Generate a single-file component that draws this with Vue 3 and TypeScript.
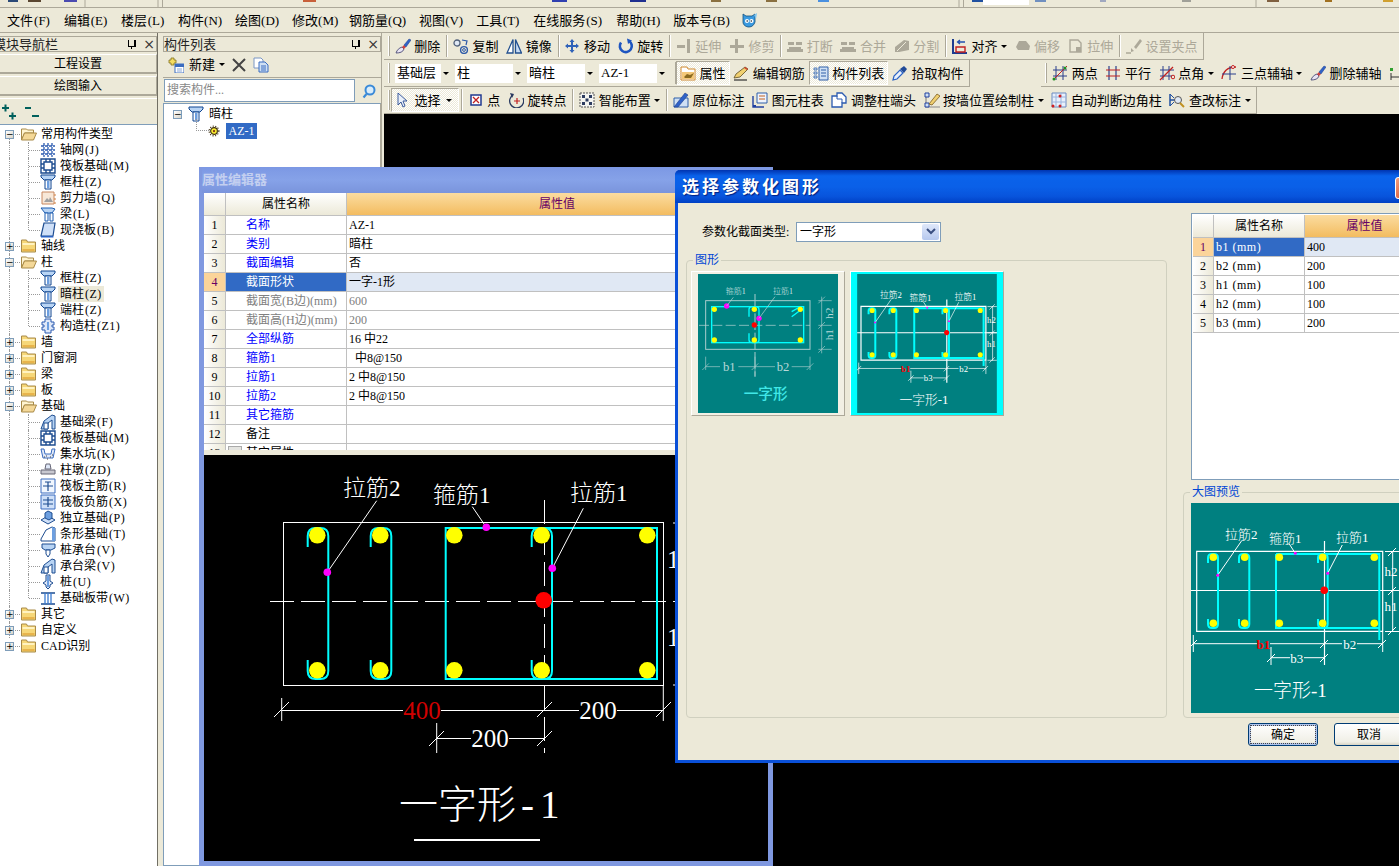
<script setup lang="ts">
type Tool = { kind?: "sep" | "grip" | "combo"; icon?: string; text?: string; off?: boolean; on?: boolean; caret?: boolean; w?: number };
type TreeRow = { level: number; open?: boolean; icon: string; name: string; key?: string; last?: boolean; hot?: boolean };
type PropRow = { no: number; name: string; value?: string; tone?: "link" | "off" | "plain"; sel?: boolean };

const sep: Tool = { kind: "sep" };
const grip: Tool = { kind: "grip" };

const menus = [
  ["文件", "(F)"], ["编辑", "(E)"], ["楼层", "(L)"], ["构件", "(N)"], ["绘图", "(D)"], ["修改", "(M)"],
  ["钢筋量", "(Q)"], ["视图", "(V)"], ["工具", "(T)"], ["在线服务", "(S)"], ["帮助", "(H)"], ["版本号", "(B)"],
];

const shards: [number, number, string][] = [
  [8, 10, "#2b4a78"], [28, 13, "#5a4630"], [64, 13, "#4a4ab0"], [303, 13, "#c8603a"], [552, 15, "#3040b0"],
  [630, 16, "#203090"], [711, 10, "#8a7040"], [766, 11, "#8a7040"], [818, 11, "#4a90e0"], [972, 11, "#2050a0"],
  [1035, 11, "#7090c0"], [1100, 6, "#a0a8c0"], [1182, 9, "#a0a098"], [1267, 12, "#806040"], [1325, 7, "#a07020"], [1383, 10, "#d0a030"],
];

const row1: Tool[] = [
  grip, { icon: "brush", text: "删除" }, sep, { icon: "copy", text: "复制" }, { icon: "mirror", text: "镜像" }, sep,
  { icon: "move", text: "移动" }, { icon: "rotate", text: "旋转" }, sep,
  { icon: "extend", text: "延伸", off: true }, { icon: "trim", text: "修剪", off: true }, sep,
  { icon: "breakb", text: "打断", off: true }, { icon: "breakb", text: "合并", off: true }, { icon: "split", text: "分割", off: true }, sep,
  { icon: "align", text: "对齐", caret: true }, { icon: "blob", text: "偏移", off: true }, { icon: "stretch", text: "拉伸", off: true }, sep,
  { icon: "grips", text: "设置夹点", off: true },
];
const row2a: Tool[] = [
  grip,
  { kind: "combo", text: "基础层", w: 56 }, { kind: "combo", text: "柱", w: 68 },
  { kind: "combo", text: "暗柱", w: 68 }, { kind: "combo", text: "AZ-1", w: 68 }, sep,
  { icon: "attr", text: "属性", on: true }, { icon: "pencil", text: "编辑钢筋" },
  { icon: "list", text: "构件列表", on: true }, { icon: "dropper", text: "拾取构件" },
];
const row2b: Tool[] = [
  grip, { icon: "twopt", text: "两点" }, { icon: "para", text: "平行" }, { icon: "angle", text: "点角", caret: true },
  { icon: "arc", text: "三点辅轴", caret: true }, { icon: "brush", text: "删除辅轴" }, { icon: "dimsm" },
];
const row3: Tool[] = [
  grip, { icon: "arrow", text: "选择", on: true, caret: true }, sep, { icon: "point", text: "点" }, { icon: "rotpt", text: "旋转点" }, sep,
  { icon: "smart", text: "智能布置", caret: true }, sep, { icon: "mark", text: "原位标注" }, { icon: "table", text: "图元柱表" },
  { icon: "adjust", text: "调整柱端头" }, { icon: "wall", text: "按墙位置绘制柱", caret: true },
  { icon: "auto", text: "自动判断边角柱" }, { icon: "review", text: "查改标注", caret: true },
];

const tree: TreeRow[] = [
  { level: 0, open: true, icon: "open", name: "常用构件类型" },
  { level: 1, icon: "grid", name: "轴网", key: "(J)" },
  { level: 1, icon: "raft", name: "筏板基础", key: "(M)" },
  { level: 1, icon: "col", name: "框柱", key: "(Z)" },
  { level: 1, icon: "shear", name: "剪力墙", key: "(Q)" },
  { level: 1, icon: "beam", name: "梁", key: "(L)" },
  { level: 1, icon: "slab", name: "现浇板", key: "(B)", last: true },
  { level: 0, icon: "folder", name: "轴线" },
  { level: 0, open: true, icon: "open", name: "柱" },
  { level: 1, icon: "col", name: "框柱", key: "(Z)" },
  { level: 1, icon: "col", name: "暗柱", key: "(Z)", hot: true },
  { level: 1, icon: "col", name: "端柱", key: "(Z)" },
  { level: 1, icon: "gz", name: "构造柱", key: "(Z1)", last: true },
  { level: 0, icon: "folder", name: "墙" },
  { level: 0, icon: "folder", name: "门窗洞" },
  { level: 0, icon: "folder", name: "梁" },
  { level: 0, icon: "folder", name: "板" },
  { level: 0, open: true, icon: "open", name: "基础" },
  { level: 1, icon: "fbeam", name: "基础梁", key: "(F)" },
  { level: 1, icon: "raft", name: "筏板基础", key: "(M)" },
  { level: 1, icon: "pit", name: "集水坑", key: "(K)" },
  { level: 1, icon: "pier", name: "柱墩", key: "(ZD)" },
  { level: 1, icon: "main", name: "筏板主筋", key: "(R)" },
  { level: 1, icon: "neg", name: "筏板负筋", key: "(X)" },
  { level: 1, icon: "iso", name: "独立基础", key: "(P)" },
  { level: 1, icon: "strip", name: "条形基础", key: "(T)" },
  { level: 1, icon: "cap", name: "桩承台", key: "(V)" },
  { level: 1, icon: "fbeam", name: "承台梁", key: "(V)" },
  { level: 1, icon: "pile", name: "桩", key: "(U)" },
  { level: 1, icon: "band", name: "基础板带", key: "(W)", last: true },
  { level: 0, icon: "folder", name: "其它" },
  { level: 0, icon: "folder", name: "自定义" },
  { level: 0, icon: "folder", name: "CAD识别" },
];

const props: PropRow[] = [
  { no: 1, name: "名称", value: "AZ-1", tone: "link" },
  { no: 2, name: "类别", value: "暗柱", tone: "link" },
  { no: 3, name: "截面编辑", value: "否", tone: "link" },
  { no: 4, name: "截面形状", value: "一字-1形", sel: true },
  { no: 5, name: "截面宽(B边)(mm)", value: "600", tone: "off" },
  { no: 6, name: "截面高(H边)(mm)", value: "200", tone: "off" },
  { no: 7, name: "全部纵筋", value: "16 中22", tone: "link" },
  { no: 8, name: "箍筋1", value: "  中8@150", tone: "link" },
  { no: 9, name: "拉筋1", value: "2 中8@150", tone: "link" },
  { no: 10, name: "拉筋2", value: "2 中8@150", tone: "link" },
  { no: 11, name: "其它箍筋", value: "", tone: "link" },
  { no: 12, name: "备注", value: "", tone: "plain" },
];

const params = [
  ["b1 (mm)", "400"], ["b2 (mm)", "200"], ["h1 (mm)", "100"], ["h2 (mm)", "100"], ["b3 (mm)", "200"],
];

// tie with hooks on its left end, in the coordinates of the drawing it sits in
function tie(l: number, r: number, t: number, b: number, hook: number, rad: number): string {
  return `M${l} ${t + hook}V${t + rad}Q${l} ${t} ${l + rad} ${t}H${r - rad}Q${r} ${t} ${r} ${t + rad}V${b - rad}Q${r} ${b} ${r - rad} ${b}H${l + rad}Q${l} ${b} ${l} ${b - rad}V${b - hook}`;
}

const bigTies = [[307.7, 328.3], [370.7, 391.3], [531.7, 552]].map(([l, r]) => tie(l, r, 529, 680, 19, 8));
const bigBars = [317.3, 380.3, 454.3, 541.7, 647.3].flatMap((x) => [[x, 536.3], [x, 671.3]]);
const smallTies = [[1208, 1218], [1239, 1249.3], [1318, 1327.7]].map(([l, r]) => tie(l, r, 554, 628, 9, 4));
const smallBars = [1213.3, 1244.7, 1279.3, 1322.7, 1374.3].flatMap((x) => [[x, 557.3], [x, 623.3]]);

const icons: Record<string, string> = {
  brush: '<path d="M1 15c1-3 3-5 6-6l2 2c-1 3-4 4-8 4z" fill="#e8e4f4" stroke="#5a5a80"/><path d="M7 9l2-2 2 2-2 2z" fill="#d04040"/><path d="M9 7l5-6 2 1-5 7z" fill="#2f62c8" stroke="#1c3c88" stroke-width=".5"/>',
  copy: '<circle cx="4" cy="5" r="3" fill="#dfe8f4" stroke="#50607a" stroke-width="1.3"/><circle cx="11" cy="12" r="3.4" fill="none" stroke="#2d5aa8" stroke-width="1.4"/><circle cx="11" cy="12" r="1.4" fill="none" stroke="#2d5aa8"/><path d="M9 2l5 1-1 4" fill="none" stroke="#2d5aa8" stroke-width="1.2"/>',
  mirror: '<path d="M7 1.5V15H1z" fill="#fff" stroke="#23508f" stroke-width="1.3"/><path d="M9.5 1.5V15h6z" fill="#c8dcf4" stroke="#23508f" stroke-width="1.3"/>',
  move: '<path d="M8 1l2.5 3H9v3h3V5.5l3 2.5-3 2.5V9H9v3h1.5L8 15l-2.5-3H7V9H4v1.5L1 8l3-2.5V7h3V4H5.500z" fill="#2f62b8"/>',
  rotate: '<path d="M3 4.5A6 6 0 1 0 11 3" fill="none" stroke="#1e55c0" stroke-width="2.6"/><path d="M9 .5l5 2-4 3.5z" fill="#1e55c0"/>',
  extend: '<path d="M1 7h8v3H1z" fill="#aca899"/><path d="M11 1h3v14h-3z" fill="#aca899"/>',
  trim: '<path d="M1 7h14v3H1z" fill="#aca899"/><path d="M6 1h3v14H6z" fill="#aca899"/>',
  breakb: '<path d="M1 4h6v3H1zM9 4h6v3H9z" fill="#aca899"/><path d="M2 9h12v2h2v3H0v-3h2z" fill="#aca899"/>',
  split: '<path d="M1 9l9-7 5 1v9l-10 2H1z" fill="#aca899"/><path d="M3 13l9-9" stroke="#ece9d8"/>',
  align: '<path d="M1 1v14h14" fill="none" stroke="#1c3c90" stroke-width="2"/><path d="M4 9h9v5H4z" fill="none" stroke="#c02020" stroke-width="1.4"/><path d="M13 4H6m2-2L5.5 4 8 6" fill="none" stroke="#2050b0" stroke-width="1.3"/>',
  blob: '<path d="M3 12L1 9l3-6h7l4 5-1 4z" fill="#aca899"/>',
  stretch: '<path d="M2 2h8l3 3v9H2z" fill="none" stroke="#aca899" stroke-width="1.4"/><path d="M8 9h5v5H8z" fill="#aca899"/>',
  grips: '<path d="M8 9l6-8 2 2-6 8z" fill="#aca899"/><path d="M5 10l3 3-3 1z" fill="#aca899"/><path d="M0 15h5" stroke="#aca899" stroke-width="1.5"/>',
  attr: '<path d="M1 2h6l1 2h7v11H1z" fill="#fff" stroke="#d08a30"/><path d="M2 7h12v7H2z" fill="#f4c878"/><path d="M4 12l3-3 3 1 4-2-3 5H5z" fill="#8a6a20"/>',
  pencil: '<path d="M1 13l2-4 9-7 3 2-8 8z" fill="#f0d070" stroke="#5a4a20" stroke-width=".8"/><path d="M1 15h13" stroke="#303030" stroke-width="1.2"/><path d="M11 3l3 2 1-1-3-2z" fill="#d04030"/>',
  list: '<path d="M6 2h9v13H6z" fill="#cfe0f4" stroke="#2f5fa8"/><path d="M8 5h5M8 8h5M8 11h5" stroke="#2f5fa8"/><path d="M1 3h3v2H1zM1 7h3v2H1zM1 11h3v2H1z" fill="#dfe8f4" stroke="#2f5fa8" stroke-width=".8"/>',
  dropper: '<path d="M1 15l1-4 6-6 3 3-6 6z" fill="#e8f0fc" stroke="#2a62c4" stroke-width="1.2"/><path d="M8 4l4-3 3 3-3 4z" fill="#204a98"/>',
  twopt: '<path d="M4 1v14M11 1v14M1 5h14M1 11h14" stroke="#2a3f8c"/><path d="M1 15L15 1" stroke="#c02020"/><circle cx="2" cy="14" r="1.5" fill="#209020"/><circle cx="13" cy="3" r="1.5" fill="#209020"/>',
  para: '<path d="M4 1v14M11 1v14" stroke="#2a3f8c" stroke-width="1.2"/><path d="M1 5h14M1 11h14" stroke="#c02020" stroke-width="1.2"/>',
  angle: '<path d="M4 1v14M10 1v14M1 5h14M1 11h12" stroke="#2a3f8c"/><path d="M1 15L14 2" stroke="#c02020" stroke-width="1.2"/><circle cx="14" cy="12" r="1.8" fill="none" stroke="#c02020"/>',
  arc: '<path d="M1 14C2 6 7 2 15 2" fill="none" stroke="#c02020" stroke-width="1.3"/><path d="M9 1v14M1 9h14" stroke="#2a3f8c"/><circle cx="12" cy="2" r="1.5" fill="#fff" stroke="#c02020"/>',
  dimsm: '<path d="M2 8v7M2 12h8" stroke="#303030"/><path d="M1 3h3v3H1z" fill="#30a030"/>',
  arrow: '<path d="M3 1v12l3-3 2 5 2-1-2-5h4z" fill="#eaf0fa" stroke="#3a5a9c"/>',
  point: '<path d="M3 3h10v10H3z" fill="#fff" stroke="#203a90" stroke-width="1.5"/><path d="M5 5l6 6M11 5l-6 6" stroke="#c02020" stroke-width="1.3"/>',
  rotpt: '<path d="M5 3A7 7 0 1 0 15 6" fill="none" stroke="#2a3a60" stroke-width="1.3"/><path d="M2 1l4 1-2 4z" fill="#2a3a60"/><path d="M9 6v6M6 9h6" stroke="#c02020" stroke-width="1.2"/>',
  smart: '<path d="M1 1h14v14H1z" fill="#f4f4f0" stroke="#555" stroke-dasharray="2 1"/><path d="M3 3h3v3H3zM10 3h3v3h-3zM3 10h3v3H3zM10 10h3v3h-3zM6.5 6.5h3v3h-3z" fill="#2c3c60"/>',
  mark: '<path d="M1 6h14v9H1z" fill="#cfe0f4" stroke="#2f5fa8"/><path d="M1 15l11-14 3 2L5 15z" fill="#2f62c8" stroke="#1c3c88" stroke-width=".6"/>',
  table: '<path d="M5 1h10v10H5z" fill="#eef3fc" stroke="#2f5fa8"/><path d="M7 4h6M7 7h6" stroke="#c06020"/><path d="M1 4v11h11" fill="none" stroke="#2040a0" stroke-width="1.4"/><path d="M1 13h3v2H1z" fill="#2040a0"/>',
  adjust: '<path d="M1 4h5V1h5l4 4v6h-4v4H1z" fill="#fff" stroke="#2a5ab0" stroke-width="1.3"/><path d="M6 4v3h5v4" fill="none" stroke="#2a5ab0"/>',
  wall: '<path d="M2 1v14h14" fill="none" stroke="#888" stroke-width="1.2"/><path d="M1 1h4v4H1zM1 11h4v4H1z" fill="#cfe0f4" stroke="#2040a0"/><path d="M5 12l8-10 3 2-8 9z" fill="#f0d070" stroke="#7a5a20" stroke-width=".8"/>',
  auto: '<path d="M1 1h14v14H1z" fill="#e8f0fc" stroke="#6a8ac0"/><path d="M5 1v14M10 1v14M1 5h14M1 10h14" stroke="#9ab4dc"/><circle cx="9" cy="4" r="1.5" fill="#d02020"/><circle cx="2" cy="14" r="1.5" fill="#d02020"/><circle cx="9" cy="14" r="1.5" fill="#d02020"/>',
  review: '<path d="M1 2v12M1 8h5" stroke="#2050a0" stroke-width="1.5"/><path d="M1 2l4 4M1 14l4-4" stroke="#2050a0"/><circle cx="9" cy="8" r="3.5" fill="#dfe8f4" stroke="#555"/><path d="M11 11l4 4" stroke="#c09020" stroke-width="2"/>',
  search: '<circle cx="9" cy="7" r="4.5" fill="#d8ecfa" stroke="#3a8ad8" stroke-width="2"/><path d="M5.5 11l-3 3.5" stroke="#3a8ad8" stroke-width="2.2"/>',
  fresh: '<path d="M3 1h3v2h2v3H6v2H3V6H1V3h2z" fill="#f4dc60" stroke="#807020" stroke-width=".8"/><path d="M7 7h9v9H7z" fill="#fff" stroke="#3a6cc0"/><path d="M7 7h9v3H7z" fill="#3a6cc0"/><path d="M9 12h5M9 14h5" stroke="#8aa8d8"/>',
  cross: '<path d="M2 2l12 12M14 2L2 14" stroke="#444" stroke-width="2"/>',
  paste: '<path d="M1 1h7l2 2v8H1z" fill="#fff" stroke="#7a96c4"/><path d="M6 5h6l3 3v7H6z" fill="#cfe0f4" stroke="#3a6cc0"/><path d="M8 9h5M8 11h5M8 13h5" stroke="#3a6cc0"/>',
  open: '<path d="M1 3h5l1 1h6v3H4l-3 7z" fill="#fff4d0" stroke="#a88a48"/><path d="M1 14l3-7h12l-3 7z" fill="#f4d898" stroke="#a88a48"/>',
  folder: '<path d="M1 2h5l1 2h8v10H1z" fill="#f6d778" stroke="#a88a48"/><path d="M2 5h12v2H2z" fill="#fff2c0"/><path d="M2 11h12v2H2z" fill="#e8b44c"/>',
  grid: '<path d="M1 4h14M1 8h14M1 12h14M4 1v14M8 1v14M12 1v14" stroke="#2a5ab0" stroke-width="1.3" stroke-dasharray="3 1"/>',
  raft: '<path d="M1 1h14v14H1zM4 4h8v8H4zM1 6h3M1 10h3M12 6h3M12 10h3M6 1v3M10 1v3M6 12v3M10 12v3" fill="none" stroke="#1d4c90" stroke-width="1.4"/>',
  col: '<path d="M1 1h14v2l-3 3H4L1 3z" fill="#b8d4f4" stroke="#0f4490"/><path d="M5 6h6v9H5z" fill="#fff" stroke="#0f4490"/><path d="M7 7h2.5v7H7z" fill="#6d9fe0"/>',
  shear: '<path d="M2 2h12v12H2z" fill="#f8e8d8" stroke="#c88860"/><path d="M4 12l3-4 2 2 1-3 3 5z" fill="#a0a0a0"/><path d="M14 5h2M14 9h2M14 13h2" stroke="#d08040"/>',
  beam: '<path d="M1 2h11l3 1-3 4H5z" fill="#b8d4f4" stroke="#1d5cb0"/><path d="M5 7h3v8H5zM10 7h3v8h-3z" fill="#fff" stroke="#1d5cb0"/>',
  slab: '<path d="M4 1h11l-2 13H1z" fill="#cfe0f8" stroke="#1d4c90" stroke-width="1.2"/><path d="M1 14h12l.5 1.5H1z" fill="#2a62c4"/>',
  gz: '<path d="M5 1h6v3h3v3h-2v2h2v3h-3v3H5v-3H2V9h2V7H2V4h3z" fill="#dfe8f8" stroke="#2a5ab0"/><path d="M7 4h2v8H7z" fill="#6d9fe0"/>',
  fbeam: '<path d="M1 15l3-8 8-6 3 1v13h-3V6L8 9v6z" fill="#b8d4f4" stroke="#1d4c90"/><path d="M4 9h4v6H4z" fill="#fff" stroke="#1d4c90"/>',
  pit: '<path d="M1 3h3l1 5h6l1-5h3l-2 9H3z" fill="#dfe8f8" stroke="#3a6cc0"/><path d="M4 11h1M7 13h1M10 11h1M6 10h1M12 9h1" stroke="#444"/>',
  pier: '<path d="M6 2h4l1 5H5z" fill="#dfe8f8" stroke="#667"/><path d="M1 8h14v4H1z" fill="#c8c8d0" stroke="#667"/>',
  main: '<path d="M1 1h14v14H1z" fill="#f0f6fe" stroke="#3a6cc0"/><path d="M3 8h10M8 4v9M5 4h6" stroke="#1d4c90" stroke-width="1.2"/>',
  neg: '<path d="M1 1h14v14H1z" fill="#cfe0f8" stroke="#3a6cc0"/><path d="M3 6h10M3 10h10M8 3v10" stroke="#1d4c90" stroke-width="1.2"/>',
  iso: '<path d="M1 10l7-4 7 4-7 4z" fill="#cfe0f8" stroke="#1d4c90"/><path d="M5 3l3-2 4 2v5l-3 2-4-2z" fill="#6d9fe0" stroke="#1d4c90"/>',
  strip: '<path d="M1 15v-2l5-9 6-3 3 1v13z" fill="#fff" stroke="#1d4c90"/><path d="M12 1l3 1v13h-3z" fill="#6d9fe0"/>',
  cap: '<path d="M2 2h13v4L11 8H5L2 6z" fill="#b8d4f4" stroke="#1d4c90"/><path d="M6 8h4v4l-2 3-2-3z" fill="#fff" stroke="#1d4c90"/>',
  pile: '<path d="M6 1h4v6l3 2-3 2v2l-2 2-2-2v-2L3 9l3-2z" fill="#dfe8f8" stroke="#1d4c90"/><path d="M7 2h2v11H7z" fill="#6d9fe0"/>',
  band: '<path d="M1 3h14M1 14h14" stroke="#1d4c90" stroke-width="1.5"/><path d="M5 3v11M11 3v11M8 3v11" stroke="#3a7ad0" stroke-width="1.3"/>',
  gear: '<circle cx="8" cy="8" r="4.5" fill="#f8ec30" stroke="#403010" stroke-width="1.5"/><circle cx="8" cy="8" r="6.5" fill="none" stroke="#403010" stroke-width="1.5" stroke-dasharray="1.5 2"/><circle cx="8" cy="8" r="1.5" fill="#803010"/>',
  mascot: '<path d="M2 2l3 2h6l3-2v8c-1 3-3 5-6 5s-6-2-6-5z" fill="#3a9ae0" stroke="#14507c" stroke-width=".8"/><circle cx="6" cy="9" r="2" fill="#fff"/><circle cx="10.5" cy="9" r="2" fill="#fff"/><circle cx="6.2" cy="9" r=".8" fill="#123"/><circle cx="10.3" cy="9" r=".8" fill="#123"/><path d="M13 3l3-2-1 6z" fill="#7cc4f0"/>',
};
</script>

<template>
  <div class="app">
    <svg class="strip" width="1399" height="8">
      <rect v-for="s in shards" :key="s[0]" :x="s[0]" y="0" :width="s[1]" height="2" :fill="s[2]" />
      <rect x="983" y="0" width="46" height="5" fill="#fff" />
      <path d="M85 0v7M158 0v7M162.5 0v7M959 0v7M963.5 0v7M1256 0v7" stroke="#aca899" fill="none" />
    </svg>

    <nav class="menubar">
      <span v-for="m in menus" :key="m[0]" class="menu">{{ m[0] }}<span class="menukey">{{ m[1] }}</span></span>
      <svg class="ico mascot" viewBox="0 0 16 16" v-html="icons.mascot"></svg>
    </nav>

    <div class="work">
      <aside class="nav">
        <div class="dock-title nav-title">
          <span>模块导航栏</span>
          <i class="pin"></i><b class="x">×</b>
        </div>
        <div class="nav-btn">工程设置</div>
        <div class="nav-btn">绘图输入</div>
        <div class="nav-tools">
          <svg width="16" height="18" viewBox="0 0 16 18"><path d="M1 5h7M4.5 1.5v7" stroke="#00605c" stroke-width="2"/><path d="M8 13h7M11.5 9.5v7" stroke="#00605c" stroke-width="2"/></svg>
          <svg width="16" height="18" viewBox="0 0 16 18"><path d="M1 5h6" stroke="#00605c" stroke-width="2"/><path d="M8 13h7" stroke="#00605c" stroke-width="2"/></svg>
        </div>
        <div class="tree">
          <div v-for="(r, i) in tree" :key="i" :class="['node', 'lv' + r.level, { lastkid: r.last }]">
            <i v-if="i < tree.length - 1" class="trunk"></i>
            <i v-if="r.level" class="branch"></i>
            <i class="elbow"></i>
            <span v-if="!r.level" class="exp">{{ r.open ? "−" : "+" }}</span>
            <svg class="ico nodeico" viewBox="0 0 16 16" v-html="icons[r.icon]"></svg>
            <span :class="['label', { hot: r.hot }]">{{ r.name }}<span v-if="r.key" class="key">{{ r.key }}</span></span>
          </div>
        </div>
      </aside>

      <section class="complist">
        <div class="dock-title">
          <span>构件列表</span>
          <i class="pin"></i><b class="x">×</b>
        </div>
        <div class="list-tools">
          <svg class="ico" viewBox="0 0 16 16" v-html="icons.fresh"></svg>
          <span class="new">新建</span><i class="caret"></i>
          <svg class="ico crossico" viewBox="0 0 16 16" v-html="icons.cross"></svg>
          <svg class="ico" viewBox="0 0 16 16" v-html="icons.paste"></svg>
        </div>
        <div class="searchrow">
          <div class="searchbox">搜索构件...</div>
          <svg class="ico" viewBox="0 0 16 16" v-html="icons.search"></svg>
        </div>
        <div class="comp-tree">
          <div class="comp-root">
            <span class="exp">−</span>
            <svg class="ico" viewBox="0 0 16 16" v-html="icons.col"></svg>
            <span>暗柱</span>
          </div>
          <div class="comp-leaf">
            <i class="leafline"></i>
            <svg class="ico gear" viewBox="0 0 16 16" v-html="icons.gear"></svg>
            <span class="leafsel">AZ-1</span>
          </div>
        </div>
      </section>

      <main class="stage">
        <div class="bars">
          <div class="barrow">
            <div class="toolbar">
              <template v-for="(t, i) in row1" :key="i">
                <i v-if="t.kind === 'grip'" class="grip"></i>
                <i v-else-if="t.kind === 'sep'" class="sep"></i>
                <span v-else :class="['tool', { off: t.off }]">
                  <svg class="ico" viewBox="0 0 16 16" v-html="icons[t.icon!]"></svg>
                  <span>{{ t.text }}</span><i v-if="t.caret" class="caret"></i>
                </span>
              </template>
            </div>
          </div>
          <div class="barrow">
            <div class="toolbar">
              <template v-for="(t, i) in row2a" :key="i">
                <i v-if="t.kind === 'grip'" class="grip"></i>
                <i v-else-if="t.kind === 'sep'" class="sep"></i>
                <span v-else-if="t.kind === 'combo'" class="combo" :style="{ width: t.w + 'px' }">
                  <span class="combo-text">{{ t.text }}</span><span class="combo-arrow"><i class="caret"></i></span>
                </span>
                <span v-else :class="['tool', { on: t.on }]">
                  <svg class="ico" viewBox="0 0 16 16" v-html="icons[t.icon!]"></svg>
                  <span>{{ t.text }}</span>
                </span>
              </template>
            </div>
            <div class="toolbar second">
              <template v-for="(t, i) in row2b" :key="i">
                <i v-if="t.kind === 'grip'" class="grip"></i>
                <span v-else class="tool">
                  <svg class="ico" viewBox="0 0 16 16" v-html="icons[t.icon!]"></svg>
                  <span v-if="t.text">{{ t.text }}</span><i v-if="t.caret" class="caret"></i>
                </span>
              </template>
            </div>
          </div>
          <div class="barrow">
            <div class="toolbar">
              <template v-for="(t, i) in row3" :key="i">
                <i v-if="t.kind === 'grip'" class="grip"></i>
                <i v-else-if="t.kind === 'sep'" class="sep"></i>
                <span v-else :class="['tool', { on: t.on }]">
                  <svg class="ico" viewBox="0 0 16 16" v-html="icons[t.icon!]"></svg>
                  <span>{{ t.text }}</span><i v-if="t.caret" class="caret"></i>
                </span>
              </template>
            </div>
          </div>
        </div>
        <div class="canvas"></div>
      </main>
    </div>

    <!-- 属性编辑器 -->
    <div class="propwin">
      <div class="propwin-title">属性编辑器</div>
      <div class="grid propgrid">
        <div class="gh"></div><div class="gh">属性名称</div><div class="gh val">属性值</div>
        <template v-for="p in props" :key="p.no">
          <div :class="['gno', { sel: p.sel }]">{{ p.no }}</div>
          <div :class="['gname', p.tone, { sel: p.sel }]">{{ p.name }}</div>
          <div :class="['gval', { off: p.tone === 'off', sel: p.sel }]">{{ p.value }}</div>
        </template>
        <div class="gno">13</div>
        <div class="gname plain"><i class="morebox"></i>其它属性</div>
        <div class="gval"></div>
      </div>
      <svg class="drawing" viewBox="204 456 564 406" width="564" height="406">
        <rect x="283.5" y="523.5" width="380" height="163" fill="none" stroke="#fff" />
        <path d="M270 602.5H768" stroke="#fff" stroke-dasharray="24 7" />
        <path d="M544.5 501V754" stroke="#fff" stroke-dasharray="24 7" />
        <rect x="445.7" y="529" width="211.3" height="151" fill="none" stroke="#00ffff" stroke-width="2" />
        <path v-for="d in bigTies" :key="d" :d="d" fill="none" stroke="#00ffff" stroke-width="2" />
        <circle v-for="b in bigBars" :key="b.join()" :cx="b[0]" :cy="b[1]" r="8.3" fill="#ffff00" />
        <circle cx="543.7" cy="601.3" r="8.3" fill="#ff0000" />
        <path d="M376.7 501.7L327.3 573.3M472.3 507.7L486.3 528.3M583.3 509.3L552.3 569.3" stroke="#fff" fill="none" />
        <g fill="#ff00ff">
          <circle cx="327.3" cy="573.3" r="3.8" />
          <circle cx="486.3" cy="528.3" r="3.8" />
          <circle cx="552.3" cy="569.3" r="3.8" />
        </g>
        <g fill="#fff" class="cad">
          <text x="343" y="497" font-size="23">拉筋<tspan class="num">2</tspan></text>
          <text x="433" y="504" font-size="23">箍筋<tspan class="num">1</tspan></text>
          <text x="570" y="502" font-size="23">拉筋<tspan class="num">1</tspan></text>
        </g>
        <g stroke="#fff" fill="none">
          <path d="M281.7 711.5H403M441 711.5H579M617 711.5H663.3M436.7 739.5H471M509 739.5H544.3" />
          <path d="M281.7 699V722M663.3 687V722M436.7 724V754M274 718l15-15M537 718l15-15M656 718l15-15M429 747l15-15M537 747l15-15" />
          <path d="M673 524h8M673 686h8" />
        </g>
        <g class="num" font-size="25" text-anchor="middle" fill="#fff">
          <text x="422" y="720" fill="#d00000">400</text>
          <text x="598" y="720">200</text>
          <text x="490" y="748">200</text>
          <text x="667" y="569" text-anchor="start">100</text>
          <text x="667" y="647" text-anchor="start">100</text>
        </g>
        <text x="399" y="819" font-size="39" fill="#fff" class="cad">一字形<tspan class="num" dx="5" letter-spacing="6">-1</tspan></text>
        <path d="M414 841H540" stroke="#fff" stroke-width="2" />
      </svg>
    </div>

    <!-- 选择参数化图形 -->
    <div class="dialog">
      <header class="dlg-title">
        <span>选择参数化图形</span>
        <b class="dlg-close"></b>
      </header>
      <div class="dlg-body">
        <div class="dlg-left">
          <div class="typerow">
            <label>参数化截面类型:</label>
            <span class="typebox"><span>一字形</span><i class="typebtn"><svg width="10" height="8" viewBox="0 0 10 8"><path d="M1 1l4 4 4-4" fill="none" stroke="#3a4f80" stroke-width="2"/></svg></i></span>
          </div>
          <div class="group shapes">
            <span class="legend">图形</span>
            <div class="cards">
              <div class="card">
                <svg width="140" height="139" viewBox="69 312 420 417">
                  <rect x="69" y="312" width="420" height="417" fill="#008080" />
                  <rect x="92" y="392" width="313" height="146" fill="none" stroke="#a8cccc" stroke-width="3" />
                  <path d="M72 466H405" stroke="#c0d8d8" stroke-width="2" stroke-dasharray="30 10" />
                  <path d="M240 372V620" stroke="#a8cccc" stroke-width="3" stroke-dasharray="50 8" />
                  <rect x="110" y="410" width="276" height="108" fill="none" stroke="#00ffff" stroke-width="4" />
                  <path d="M222 440V418Q222 410 232 410H244Q252 410 252 420V510Q252 518 244 518H232Q222 518 222 510V490" fill="none" stroke="#00ffff" stroke-width="4" />
                  <path d="M350 440l30-22M350 425l24-14" stroke="#00ffff" stroke-width="4" />
                  <circle v-for="b in [[118,418],[238,418],[376,418],[118,510],[238,510],[376,510]]" :key="b.join()" :cx="b[0]" :cy="b[1]" r="8" fill="#ffff00" />
                  <circle cx="155" cy="408" r="8" fill="#ff00ff" />
                  <circle cx="252" cy="445" r="8" fill="#ff00ff" />
                  <circle cx="238" cy="465" r="8" fill="#ff0000" />
                  <path d="M175 382L155 408M300 380L252 445" stroke="#c0d8d8" stroke-width="2" />
                  <text x="152" y="372" font-size="24" fill="#d0e4e4" class="cad">箍筋<tspan class="num">1</tspan></text>
                  <text x="294" y="372" font-size="24" fill="#d0e4e4" class="cad">拉筋<tspan class="num">1</tspan></text>
                  <path d="M92 590H135M190 590H300M350 590H405M92 560V600M240 560V620M405 560V600M82 600l20-20M230 600l20-20M395 600l20-20" stroke="#a8cccc" stroke-width="2" fill="none" />
                  <path d="M430 392H470M430 466H470M430 538H470M440 380V550M430 400l20-20M430 476l20-20M430 548l20-20" stroke="#a8cccc" stroke-width="2" fill="none" />
                  <text x="163" y="603" font-size="38" text-anchor="middle" fill="#b8d8d8" class="num">b1</text>
                  <text x="324" y="603" font-size="38" text-anchor="middle" fill="#b8d8d8" class="num">b2</text>
                  <text transform="translate(474 430) rotate(-90)" font-size="34" text-anchor="middle" fill="#b8d8d8" class="num">h2</text>
                  <text transform="translate(474 494) rotate(-90)" font-size="34" text-anchor="middle" fill="#b8d8d8" class="num">h1</text>
                  <text x="272" y="688" font-size="44" text-anchor="middle" fill="#40e8e8" font-weight="500" class="sans">一字形</text>
                </svg>
              </div>
              <div class="card picked">
                <svg width="140" height="139" viewBox="1191 503 208 207"><use href="#figure" /></svg>
              </div>
            </div>
          </div>
        </div>
        <div class="dlg-right">
          <div class="paramgrid">
            <div class="grid pgrid">
              <div class="gh"></div><div class="gh">属性名称</div><div class="gh val">属性值</div>
              <template v-for="(p, i) in params" :key="p[0]">
                <div :class="['gno', { sel: i === 0 }]">{{ i + 1 }}</div>
                <div :class="['gname', 'tight', { sel: i === 0 }]">{{ p[0] }}</div>
                <div :class="['gval', { sel: i === 0 }]">{{ p[1] }}</div>
              </template>
            </div>
          </div>
          <div class="group preview">
            <span class="legend">大图预览</span>
            <svg class="preview-img" width="208" height="210" viewBox="1191 503 208 210"><use href="#figure" /></svg>
          </div>
        </div>
      </div>
      <footer class="dlg-foot">
        <span class="xpbtn focus">确定</span>
        <span class="xpbtn">取消</span>
      </footer>
    </div>

    <svg class="defs" width="0" height="0">
      <g id="figure">
        <rect x="1191" y="503" width="208" height="210" fill="#008080" />
        <rect x="1196.7" y="551.3" width="186" height="80" fill="none" stroke="#fff" stroke-width="1.2" vector-effect="non-scaling-stroke" />
        <path d="M1191 590.5H1399M1324.5 541V665" stroke="#fff" stroke-width="1.2" vector-effect="non-scaling-stroke" />
        <path d="M1276 554H1379.3V640M1379.3 628H1276V554" fill="none" stroke="#00ffff" stroke-width="2" vector-effect="non-scaling-stroke" />
        <path v-for="d in smallTies" :key="d" :d="d" fill="none" stroke="#00ffff" stroke-width="2" vector-effect="non-scaling-stroke" />
        <circle v-for="b in smallBars" :key="b.join()" :cx="b[0]" :cy="b[1]" r="3.8" fill="#ffff00" />
        <circle cx="1324.3" cy="590.3" r="3.8" fill="#ff0000" />
        <path d="M1241.7 540.7L1217.7 575.3M1289.3 544L1295.3 553.3M1342.3 545L1327.7 573.3" stroke="#fff" fill="none" />
        <g fill="#ff00ff">
          <circle cx="1217.7" cy="575.3" r="1.5" />
          <circle cx="1295.3" cy="553.3" r="1.5" />
          <circle cx="1327.7" cy="573.3" r="1.5" />
        </g>
        <g fill="#fff" font-size="13" class="cad">
          <text x="1225" y="539">拉筋<tspan class="num">2</tspan></text>
          <text x="1269" y="543">箍筋<tspan class="num">1</tspan></text>
          <text x="1336" y="542">拉筋<tspan class="num">1</tspan></text>
        </g>
        <path d="M1193.3 643.7H1257M1270 643.7H1342M1357 643.7H1382.7M1271 657.7H1290M1304 657.7H1324.3M1193.3 635V652M1382.7 632V652M1271 647V665M1189 648l8-8M1320 648l8-8M1378 648l8-8M1267 662l8-8M1320 662l8-8" stroke="#fff" fill="none" />
        <path d="M1385 551.5H1399M1385 590.5H1399M1385 631.5H1399M1392.7 551V632M1388 556l8-8M1388 595l8-8M1388 635l8-8" stroke="#fff" fill="none" />
        <g font-size="13" text-anchor="middle" fill="#fff" class="num">
          <text x="1263.3" y="648.5" fill="#ff0000" font-weight="bold">b1</text>
          <text x="1349.7" y="648.5">b2</text>
          <text x="1296.7" y="662.5">b3</text>
          <text x="1391" y="576">h2</text>
          <text x="1391" y="611">h1</text>
        </g>
        <text x="1254" y="697" font-size="19" fill="#fff" class="cad">一字形<tspan class="num">-1</tspan></text>
      </g>
    </svg>
  </div>
</template>

<style>
html,
body {
  margin: 0;
  background: #ece9d8;
}
</style>

<style scoped>
.app {
  position: relative;
  width: 1399px;
  height: 866px;
  overflow: hidden;
  display: flex;
  flex-direction: column;
  background: #ece9d8;
  color: #000;
  font: 12px "Liberation Serif", "Noto Sans CJK SC", serif;
  line-height: 1;
}
i {
  font-style: normal;
}
.ico {
  width: 16px;
  height: 16px;
  flex: none;
  display: block;
}
.key {
  margin-left: 1px;
  letter-spacing: 0.5px;
}
.menukey {
  display: inline-block;
  width: 18px;
  text-align: center;
}
.strip {
  display: block;
  flex: none;
  height: 8px;
  box-sizing: border-box;
  border-bottom: 1px solid #aca899;
}
.menubar {
  flex: none;
  height: 25px;
  display: flex;
  align-items: center;
  padding-left: 7px;
  gap: 13px;
  font-size: 13px;
  border-bottom: 1px solid #aca899;
  box-sizing: border-box;
}
.mascot {
  margin-left: -2px;
}
.work {
  flex: 1;
  display: flex;
  min-height: 0;
}

/* dock panels */
.nav {
  width: 158px;
  flex: none;
  display: flex;
  flex-direction: column;
  overflow: hidden;
  border-right: 1px solid #716f64;
  box-sizing: border-box;
  padding-top: 3px;
}
.dock-title {
  flex: none;
  height: 14px;
  display: flex;
  align-items: center;
  border: 1px solid #aca899;
  border-width: 1px 1px 1px 0;
  position: relative;
  font-size: 13px;
  color: #222;
  white-space: nowrap;
}
.nav-title > span {
  margin-left: -7px;
}
.pin {
  position: absolute;
  right: 20px;
  top: 3px;
  width: 5px;
  height: 6px;
  border: 1px solid #000;
  border-width: 0 2px 1px 1px;
}
.pin::after {
  content: "";
  position: absolute;
  left: 2px;
  top: 6px;
  width: 1px;
  height: 3px;
  background: #000;
}
.x {
  position: absolute;
  right: 1px;
  top: 0;
  font: 14px/14px "DejaVu Sans", sans-serif;
  color: #333;
}
.nav-btn {
  flex: none;
  height: 20px;
  margin-top: 2px;
  display: flex;
  align-items: center;
  justify-content: center;
  border-top: 1px solid #fff;
  border-bottom: 2px solid #aca899;
  border-right: 1px solid #aca899;
  box-sizing: border-box;
}
.nav-tools {
  flex: none;
  height: 26px;
  margin-top: 2px;
  display: flex;
  align-items: center;
  gap: 7px;
  padding-left: 1px;
  border-top: 1px solid #fff;
  box-sizing: border-box;
}
.tree {
  flex: 1;
  background: #fff;
  border-top: 1px solid #7f9db9;
  padding-top: 1px;
}
.node {
  position: relative;
  height: 16px;
  display: flex;
  align-items: center;
  white-space: nowrap;
}
.lv0 {
  padding-left: 20px;
}
.lv0 .nodeico {
  width: 17px;
}
.lv0 .label {
  margin-left: 4px;
}
.lv1 {
  padding-left: 40px;
}
.lv1 .label {
  margin-left: 2px;
  padding: 0 2px;
  line-height: 16px;
}
.label.hot {
  background: #ece9d8;
}
.trunk {
  position: absolute;
  left: 9px;
  top: 0;
  bottom: 0;
  border-left: 1px dotted #999;
}
.node:first-child .trunk {
  top: 8px;
}
.branch {
  position: absolute;
  left: 28px;
  top: 0;
  height: 8px;
  border-left: 1px dotted #999;
}
.node.lv1:not(.lastkid) .branch {
  height: 16px;
}
.elbow {
  position: absolute;
  left: 10px;
  top: 8px;
  width: 10px;
  border-top: 1px dotted #999;
}
.lv1 .elbow {
  left: 29px;
  width: 11px;
}
.exp {
  width: 9px;
  height: 9px;
  box-sizing: border-box;
  border: 1px solid #7f9db9;
  background: linear-gradient(135deg, #fff, #d8d4c8);
  font: 9px/7px "DejaVu Sans", sans-serif;
  text-align: center;
  color: #000;
  flex: none;
}
.lv0 .exp {
  position: absolute;
  left: 5px;
  top: 4px;
}

/* component list */
.complist {
  width: 219px;
  flex: none;
  margin-left: 5px;
  display: flex;
  flex-direction: column;
  padding-top: 3px;
  box-sizing: border-box;
  border-right: 1px solid #aca899;
}
.complist .dock-title {
  border-width: 1px 1px 1px 1px;
}
.list-tools {
  flex: none;
  height: 25px;
  display: flex;
  align-items: center;
  padding-left: 5px;
  border-bottom: 1px solid #aca899;
  font-size: 13px;
}
.new {
  margin-left: 5px;
}
.list-tools .caret {
  margin: 0 6px 0 4px;
}
.crossico {
  margin-right: 6px;
}
.searchrow {
  flex: none;
  display: flex;
  align-items: center;
  height: 25px;
  padding-left: 1px;
  gap: 6px;
}
.searchbox {
  width: 191px;
  height: 23px;
  box-sizing: border-box;
  background: #fff;
  border: 1px solid #7f9db9;
  color: #888;
  font-size: 12px;
  line-height: 20px;
  padding-left: 2px;
}
.comp-tree {
  flex: 1;
  background: #fff;
  border: 1px solid #7f9db9;
  border-right-color: #aca899;
  padding-top: 1px;
}
.comp-root {
  display: flex;
  align-items: center;
  height: 16px;
  padding-left: 9px;
  margin-top: 1px;
}
.comp-root .exp {
  margin-right: 6px;
}
.comp-root span:last-child {
  margin-left: 5px;
}
.comp-leaf {
  position: relative;
  display: flex;
  align-items: center;
  height: 17px;
  padding-left: 44px;
}
.leafline {
  position: absolute;
  left: 32px;
  top: -3px;
  width: 12px;
  height: 11px;
  border: 1px dotted #999;
  border-width: 0 0 1px 1px;
}
.gear {
  width: 12px;
  height: 12px;
}
.leafsel {
  margin-left: 6px;
  width: 31px;
  height: 16px;
  line-height: 16px;
  background: #316ac5;
  color: #fff;
  text-align: center;
}

/* toolbars */
.stage {
  flex: 1;
  min-width: 0;
  display: flex;
  flex-direction: column;
  margin-left: 2px;
}
.bars {
  flex: none;
  height: 81px;
}
.barrow {
  height: 27px;
  display: flex;
  box-sizing: border-box;
}
.toolbar {
  display: flex;
  align-items: center;
  height: 26px;
  padding-right: 2px;
  border-right: 1px solid #aca899;
  border-bottom: 1px solid #aca899;
  font-size: 13px;
  white-space: nowrap;
}
.toolbar.second {
  margin-left: 71px;
  border-right: 0;
  flex: 1;
  overflow: hidden;
  padding-right: 0;
}
.grip {
  box-sizing: border-box;
  width: 2px;
  height: 20px;
  margin: 0 1px 0 4px;
  border-left: 1px solid #fff;
  border-right: 1px solid #aca899;
}
.grip + .combo {
  margin-left: 4px;
}
.sep {
  width: 1px;
  height: 22px;
  margin: 0 2px;
  background: #aca899;
  box-shadow: 1px 0 0 #fff;
}
.combo + .sep {
  margin: 0 0 0 4px;
}
.tool {
  display: flex;
  align-items: center;
  gap: 3.5px;
  height: 24px;
  padding: 0 3.85px;
  box-sizing: border-box;
}
.tool.off {
  color: #aca899;
}
.tool.on {
  background: repeating-conic-gradient(#fff 0 25%, #ece9d8 0 50%) 0 0 / 2px 2px;
  border: 1px solid;
  border-color: #aca899 #fff #fff #aca899;
  padding: 0 3px;
}
.tool.on .caret {
  margin: 0 3px 0 2px;
}
.caret {
  display: inline-block;
  width: 0;
  height: 0;
  border: 3px solid transparent;
  border-top: 3px solid #000;
  border-bottom: 0;
}
.combo {
  display: flex;
  align-items: stretch;
  height: 19px;
  margin-right: 4px;
  background: #fff;
  box-sizing: border-box;
}
.combo-text {
  flex: 1;
  line-height: 18px;
  padding-left: 2px;
}
.combo-arrow {
  width: 10px;
  background: #ece9d8;
  display: flex;
  align-items: center;
  justify-content: center;
}
.canvas {
  flex: 1;
  background: #000;
}

/* attribute window */
.propwin {
  position: absolute;
  left: 199px;
  top: 167px;
  width: 574px;
  height: 699px;
  box-sizing: border-box;
  background: #7f98e0;
  padding: 0 5px 4px;
  display: flex;
  flex-direction: column;
}
.propwin-title {
  flex: none;
  height: 26px;
  margin: 0 -2px;
  line-height: 26px;
  font-weight: bold;
  font-size: 13px;
  color: #c4d0f0;
  background: linear-gradient(#7c98e4, #86a2e8 50%, #7a94dc);
}
.grid {
  display: grid;
  background: #fff;
  overflow: hidden;
}
.propgrid {
  flex: none;
  height: 257px;
  grid-template-columns: 22px 121px 1fr;
  grid-template-rows: 23px;
  grid-auto-rows: 19px;
  border-bottom: 5px solid #ece9d8;
  box-sizing: content-box;
}
.gh {
  display: flex;
  align-items: center;
  justify-content: center;
  background: linear-gradient(#fff, #ece9d8);
  border-right: 1px solid #c0c0c0;
  border-bottom: 1px solid #c0c0c0;
  box-sizing: border-box;
}
.gh.val {
  background: linear-gradient(#fbdca0, #f3bc60);
  color: #660066;
}
.gno,
.gname,
.gval {
  box-sizing: border-box;
  border-bottom: 1px solid #c0c0c0;
  display: flex;
  align-items: center;
  white-space: pre;
  overflow: hidden;
}
.gno {
  justify-content: center;
  background: linear-gradient(90deg, #fff, #ece9d8);
  border-right: 1px solid #c0c0c0;
}
.gno.sel {
  background: #fbd49a;
  color: #660066;
}
.gname {
  padding-left: 20px;
  border-right: 1px solid #c0c0c0;
}
.gname.tight {
  padding-left: 2px;
  letter-spacing: 0.5px;
}
.gname.link {
  color: #0000ff;
}
.gname.off {
  color: #808080;
}
.gname.sel {
  background: #316ac5;
  color: #fff;
}
.gval {
  padding-left: 2px;
}
.gval.off {
  color: #808080;
}
.gval.sel {
  background: #e0e8f4;
}
.morebox {
  width: 12px;
  height: 12px;
  flex: none;
  margin: 0 4px 0 -18px;
  background: #e4e4e0;
  border: 1px solid #aaa;
}
.drawing {
  display: block;
  flex: none;
  background: #000;
}
.cad {
  font-family: "Noto Sans CJK SC", sans-serif;
  font-weight: 300;
}
.sans {
  font-family: "Noto Sans CJK SC", sans-serif;
}
.num {
  font-family: "Liberation Serif", serif;
}

/* parametric dialog */
.dialog {
  position: absolute;
  left: 675px;
  top: 170px;
  width: 760px;
  height: 593px;
  box-sizing: border-box;
  background: #ece9d8;
  border: 3px solid #0a50d8;
  border-top: 0;
  border-radius: 5px 5px 0 0;
  display: flex;
  flex-direction: column;
}
.dlg-title {
  flex: none;
  height: 33px;
  margin: 0 -3px;
  padding: 2px 7px 0;
  box-sizing: border-box;
  display: flex;
  align-items: center;
  background: linear-gradient(#0034b0 0, #0a62ea 18%, #0a60e8 50%, #0854dc 80%, #0040c4);
  color: #fff;
  font-size: 17px;
  font-weight: bold;
  letter-spacing: 3px;
  text-shadow: 1px 1px 1px #002080;
  border-radius: 5px 5px 0 0;
}
.dlg-close {
  position: absolute;
  left: 717px;
  top: 7px;
  width: 22px;
  height: 22px;
  box-sizing: border-box;
  border-radius: 3px;
  border: 1px solid #fff;
  background: linear-gradient(135deg, #f0a080, #d04020);
}
.dlg-body {
  flex: 1;
  display: flex;
  gap: 16px;
  padding: 0 8px;
  min-height: 0;
}
.dlg-left {
  width: 481px;
  flex: none;
}
.typerow {
  margin-top: 19px;
  height: 20px;
  padding-left: 16px;
  display: flex;
  align-items: center;
}
.typerow label {
  width: 94px;
  white-space: nowrap;
}
.typebox {
  width: 145px;
  height: 20px;
  box-sizing: border-box;
  border: 1px solid #7f9db9;
  background: #fff;
  display: flex;
  align-items: center;
  justify-content: space-between;
  padding: 0 1px 0 3px;
}
.typebtn {
  width: 17px;
  height: 16px;
  background: linear-gradient(#dfe8fa, #b6c8ee);
  border-radius: 2px;
  display: flex;
  align-items: center;
  justify-content: center;
}
.group {
  position: relative;
  border: 1px solid #d0d0bf;
  border-radius: 4px;
  box-sizing: border-box;
}
.legend {
  position: absolute;
  left: 6px;
  top: -7px;
  padding: 0 2px;
  background: #ece9d8;
  color: #0046d5;
}
.shapes {
  margin-top: 18px;
  height: 458px;
  padding: 10px 4px;
}
.cards {
  display: flex;
  gap: 5px;
}
.card {
  width: 154px;
  height: 145px;
  box-sizing: border-box;
  display: flex;
  align-items: center;
  justify-content: center;
  border: 1px solid;
  border-color: #fff #aca899 #aca899 #fff;
  background: #f2f0e4;
}
.card svg {
  display: block;
}
.card.picked {
  background: #00ffff;
}
.dlg-right {
  flex: 1;
  min-width: 0;
}
.paramgrid {
  margin: 10px 0 0 8px;
  height: 267px;
  border: 1px solid #7f9db9;
  border-width: 1px 0 1px 1px;
  box-sizing: border-box;
  background: #fff;
  padding: 1px 0 0 1px;
}
.pgrid {
  grid-template-columns: 21px 91px 120px;
  grid-template-rows: 23px;
  grid-auto-rows: 19px;
}
.preview {
  margin-top: 12px;
  height: 226px;
  padding: 10px 0 0 7px;
}
.preview-img {
  display: block;
}
.dlg-foot {
  flex: none;
  height: 44px;
  display: flex;
  gap: 16px;
  padding: 0 0 0 570px;
}
.xpbtn {
  width: 70px;
  height: 23px;
  margin-top: 7px;
  box-sizing: border-box;
  border: 1px solid #003c74;
  border-radius: 3px;
  background: linear-gradient(#fff, #f0efe6 85%, #d8d4c4);
  display: flex;
  align-items: center;
  justify-content: center;
}
.xpbtn.focus {
  box-shadow: inset 0 0 0 2px #b0c4ec;
  outline: 1px dotted #444;
  outline-offset: -3px;
}
.defs {
  position: absolute;
}
</style>
